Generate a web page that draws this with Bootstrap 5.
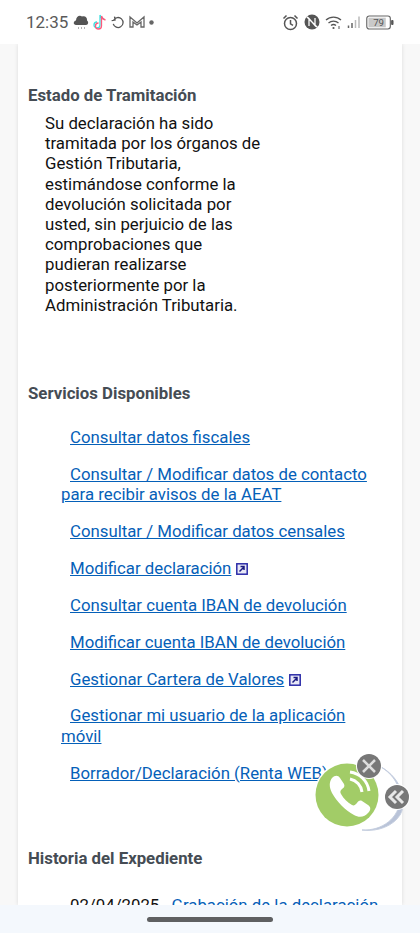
<!DOCTYPE html>
<html lang="es">
<head>
<meta charset="utf-8">
<title>Estado de Tramitación</title>
<link rel="stylesheet" href="https://cdn.jsdelivr.net/npm/bootstrap@5.3.0/dist/css/bootstrap.min.css">
<style>
html,body{height:933px;overflow:hidden}
body{font-family:Roboto,"Liberation Sans",sans-serif;background:#f8f8f8;position:relative}
.phone{height:933px}
.statusbar{height:44px;background:#fff;padding:0 26px;color:#555}
.clock{font-size:17px;color:#5a5a5a;line-height:20px}
.left-ic{gap:3px;margin-left:5px}
.right-ic{gap:5px}
.view{height:861px;overflow:hidden;background:#f8f8f8}
.sheet{margin:0 18px;height:861px;background:#fff;box-shadow:0 0 4px rgba(0,0,0,.12);padding:0 10px;color:#111;font-size:16.8px;line-height:20.2px}
.head-t{font-size:16.8px;font-weight:700;color:#454c54;line-height:20px;margin:0}
.h1-t{padding-top:41px}
.state{padding:8px 0 0 17px;width:235px;margin:0}
.h2-t{padding-top:68px}
.svc{list-style:none;margin:0;padding:24px 14px 0 33px}
.svc li{margin-bottom:16.7px;text-indent:9px}
.svc a,.hist a{color:#0560b8;text-decoration:underline}
.h3-t{padding-top:49px}
.hist{padding:27px 0 0 42px;white-space:nowrap}
.hist a{margin-left:8px;text-decoration:none}
.ext{display:inline-block;vertical-align:-1px;margin-left:5px}
.navbar-b{height:28px;background:#f4f8fd;position:relative}
.pill{width:126px;height:5px;border-radius:3px;background:#5f6062}
.fab{position:absolute;left:313px;top:752px;width:100px;height:84px}
</style>
</head>
<body>
<div class="phone d-flex flex-column">
  <div class="statusbar d-flex align-items-center justify-content-between">
    <div class="d-flex align-items-center">
      <span class="clock">12:35</span>
      <div class="d-flex align-items-center left-ic">
        <svg width="16" height="18" viewBox="0 0 16 18"><path d="M3 12c-3 0-3-4 0-4.500C3 3 7 1.500 9 3.500c3-1 5.500 1 5 4 1.800 1 1.500 4.500-1 4.500z" fill="#555"/><path d="M5 15h1M8 15h1M11 15h1" stroke="#666" stroke-width="1"/></svg>
        <svg width="16" height="18" viewBox="0 0 16 18"><path d="M8 2v10a3 3 0 1 1-3-3M8 2c.5 2.500 2 3.500 4 4" fill="none" stroke="#3fe0e0" stroke-width="1.300"/><path d="M9.500 3v10a3 3 0 1 1-3-3M9.500 3c.5 2.500 2 3.500 4 4" fill="none" stroke="#fe5a7c" stroke-width="1.300"/></svg>
        <svg width="14" height="14" viewBox="0 0 14 14"><path d="M3 4.500a5 5 0 1 1-1 3.500M1 4.500h3.500V1" fill="none" stroke="#555" stroke-width="1.300" transform="rotate(-10 7 7)"/></svg>
        <svg width="18" height="14" viewBox="0 0 18 14"><path d="M2 2l7 6 7-6v10h-3V7l-4 3-4-3v5H2z" fill="none" stroke="#666" stroke-width="1.300"/></svg>
        <svg width="5" height="5" viewBox="0 0 5 5"><circle cx="2.500" cy="2.500" r="2.200" fill="#666"/></svg>
      </div>
    </div>
    <div class="d-flex align-items-center right-ic">
      <svg width="17" height="17" viewBox="0 0 17 17"><circle cx="8.500" cy="9.500" r="6" fill="none" stroke="#555" stroke-width="1.500"/><path d="M8.500 6v3.800l2.500 1.500M1.500 4.500l3-3M15.500 4.500l-3-3" fill="none" stroke="#555" stroke-width="1.500"/></svg>
      <svg width="16" height="16" viewBox="0 0 16 16"><circle cx="8" cy="8" r="7.500" fill="#555"/><path d="M5 12V4.500l6 7V4M2.500 2.500l11 11" fill="none" stroke="#fff" stroke-width="1.300"/></svg>
      <svg width="17" height="15" viewBox="0 0 17 15"><path d="M1 5a11 11 0 0 1 15 0M3.500 8a7.500 7.500 0 0 1 10 0M6 10.500a4 4 0 0 1 5 0" fill="none" stroke="#555" stroke-width="1.300"/><circle cx="8.500" cy="13" r="1.100" fill="#555"/><path d="M14 11v3" stroke="#555"/></svg>
      <svg width="14" height="14" viewBox="0 0 14 14"><path d="M1.500 10.500V13M5 8v5" stroke="#666" stroke-width="1.500"/><path d="M8.500 5v8M12 1.500V13" stroke="#bbb" stroke-width="1.500"/></svg>
      <svg width="28" height="15" viewBox="0 0 29 15" class="ms-n1"><rect x=".8" y=".8" width="24.400" height="13.400" rx="2.500" fill="#fff" stroke="#666" stroke-width="1.200"/><rect x="2.500" y="2.500" width="18" height="10" fill="#c9c9c9"/><rect x="26" y="5" width="2.500" height="5" rx="1" fill="#555"/><text x="13" y="11" font-size="10" text-anchor="middle" fill="#555" font-family="Roboto">79</text></svg>
    </div>
  </div>
  <div class="view">
    <div class="sheet">
      <h2 class="head-t h1-t">Estado de Tramitación</h2>
      <p class="state">Su declaración ha sido tramitada por los órganos de Gestión Tributaria, estimándose conforme la devolución solicitada por usted, sin perjuicio de las comprobaciones que pudieran realizarse posteriormente por la Administración Tributaria.</p>
      <h2 class="head-t h2-t">Servicios Disponibles</h2>
      <ul class="svc">
        <li><a href="#">Consultar datos fiscales</a></li>
        <li><a href="#">Consultar / Modificar datos de contacto para recibir avisos de la AEAT</a></li>
        <li><a href="#">Consultar / Modificar datos censales</a></li>
        <li><a href="#">Modificar declaración</a><svg class="ext" width="12" height="12" viewBox="0 0 12 12"><rect x=".8" y=".8" width="10.400" height="10.400" fill="#e8e8f6" stroke="#2b2ba8" stroke-width="1.500"/><path d="M3.500 8.500l4-4M4.500 3.500h3.500V7" fill="none" stroke="#1a1a80" stroke-width="1.500"/></svg></li>
        <li><a href="#">Consultar cuenta IBAN de devolución</a></li>
        <li><a href="#">Modificar cuenta IBAN de devolución</a></li>
        <li><a href="#">Gestionar Cartera de Valores</a><svg class="ext" width="12" height="12" viewBox="0 0 12 12"><rect x=".8" y=".8" width="10.400" height="10.400" fill="#e8e8f6" stroke="#2b2ba8" stroke-width="1.500"/><path d="M3.500 8.500l4-4M4.500 3.500h3.500V7" fill="none" stroke="#1a1a80" stroke-width="1.500"/></svg></li>
        <li><a href="#">Gestionar mi usuario de la aplicación móvil</a></li>
        <li><a href="#">Borrador/Declaración (Renta WEB)</a></li>
      </ul>
      <h2 class="head-t h3-t">Historia del Expediente</h2>
      <div class="hist">02/04/2025 <a href="#">Grabación de la declaración</a></div>
    </div>
  </div>
  <div class="navbar-b d-flex justify-content-center align-items-center"><div class="pill"></div></div>
</div>
<svg class="fab" viewBox="0 0 100 84">
  <path d="M62 12c14 6 25 18 25 34 0 20-18 33-38 32 16 2 31-4 38-15 8-13 2-40-25-51z" fill="#b9c3d8" stroke="#c6cfe0" stroke-width="1"/>
  <circle cx="34" cy="43" r="33" fill="#fff"/>
  <circle cx="34" cy="43" r="31.500" fill="#a2cc67"/>
  <path d="M19 26c3-3 6-3 8 0l4 6c1 2 0 4-2 5-2 2-2 3-1 5 3 5 6 8 11 11 2 1 3 0 5-2 1-2 3-3 5-2l6 4c3 2 3 5 0 8-3 4-9 5-14 2-9-5-17-13-22-22-3-6-3-11 0-15z" fill="#fff"/>
  <path d="M37 27a15 15 0 0 1 12 13M37 20a22 22 0 0 1 19 19" fill="none" stroke="#fff" stroke-width="3"/>
  <circle cx="56" cy="14" r="13" fill="#fff"/>
  <circle cx="56" cy="14" r="12" fill="#777"/>
  <path d="M50 8l12 12M62 8L50 20" stroke="#ddd" stroke-width="2.500"/>
  <circle cx="84" cy="45" r="13" fill="#fff"/>
  <circle cx="84" cy="45" r="12" fill="#777"/>
  <path d="M83 39l-6 6 6 6M90 39l-6 6 6 6" fill="none" stroke="#e8e8e8" stroke-width="3"/>
</svg>
</body>
</html>
